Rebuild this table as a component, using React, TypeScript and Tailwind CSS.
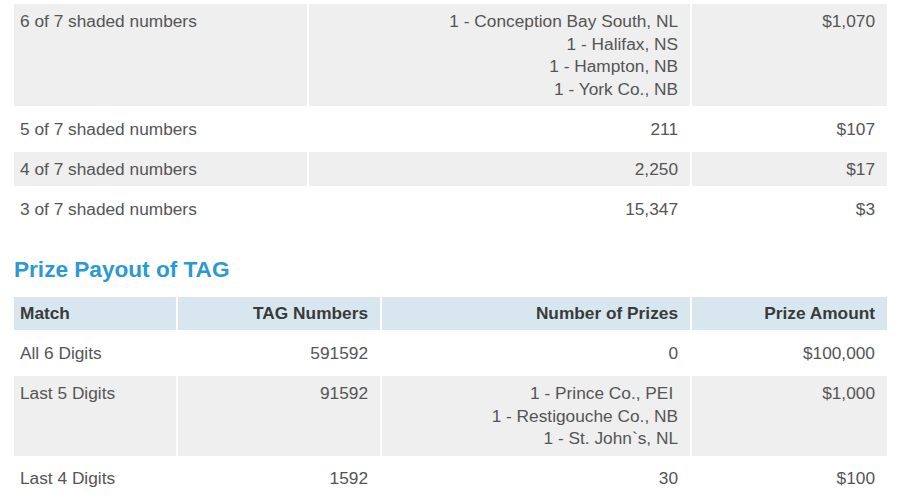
import React from 'react';

type Row = { cells: string[][]; shaded: boolean; size: string };

const winners: Row[] = [
  {
    cells: [
      ['6 of 7 shaded numbers'],
      ['1 - Conception Bay South, NL', '1 - Halifax, NS', '1 - Hampton, NB', '1 - York Co., NB'],
      ['$1,070'],
    ],
    shaded: true,
    size: 'h-[102px] pt-[6px]',
  },
  { cells: [['5 of 7 shaded numbers'], ['211'], ['$107']], shaded: false, size: 'h-[46px] pt-[12px]' },
  { cells: [['4 of 7 shaded numbers'], ['2,250'], ['$17']], shaded: true, size: 'h-[34px] pt-[6px]' },
  { cells: [['3 of 7 shaded numbers'], ['15,347'], ['$3']], shaded: false, size: 'h-[46px] pt-[12px]' },
];

const tagRows: Row[] = [
  { cells: [['All 6 Digits'], ['591592'], ['0'], ['$100,000']], shaded: false, size: 'h-[46px] pt-[12px]' },
  {
    cells: [
      ['Last 5 Digits'],
      ['91592'],
      ['1 - Prince Co., PEI\u00a0', '1 - Restigouche Co., NB', '1 - St. John`s, NL'],
      ['$1,000'],
    ],
    shaded: true,
    size: 'h-[80px] pt-[6px]',
  },
  { cells: [['Last 4 Digits'], ['1592'], ['30'], ['$100']], shaded: false, size: 'h-[46px] pt-[11px]' },
];

function Cell({ lines, first, shaded, size }: { lines: string[]; first: boolean; shaded: boolean; size: string }) {
  return (
    <div
      className={`${size} ${first ? 'pl-[6px] text-left' : 'pr-[12px] text-right'} ${
        shaded ? 'bg-[#efefef]' : 'bg-white'
      }`}
    >
      {lines.map((l, i) => (
        <div key={i} className="whitespace-pre">
          {l}
        </div>
      ))}
    </div>
  );
}

export default function App() {
  return (
    <div
      className="w-[900px] h-[500px] overflow-hidden bg-white pt-[4px] pl-[14px] text-[17.3px] leading-[22.6px] text-[#555555]"
      style={{ fontFamily: '"Liberation Sans", Arial, sans-serif' }}
    >
      {/* Winning numbers table */}
      <div className="grid grid-cols-[293px_381px_195px] gap-x-[2px]">
        {winners.map((row, r) =>
          row.cells.map((lines, c) => (
            <Cell key={`${r}-${c}`} lines={lines} first={c === 0} shaded={row.shaded} size={row.size} />
          ))
        )}
      </div>

      <h2 className="mt-[23px] mb-[12px] text-[22.6px] leading-[30px] font-bold text-[#2a9ad3]">
        Prize Payout of TAG
      </h2>

      {/* TAG table */}
      <div className="grid grid-cols-[162px_202px_308px_195px] gap-x-[2px]">
        {['Match', 'TAG Numbers', 'Number of Prizes', 'Prize Amount'].map((h, i) => (
          <div
            key={h}
            className={`h-[33px] flex items-center bg-[#d8e7ef] font-bold text-[#3a3a3a] ${
              i === 0 ? 'pl-[6px] justify-start' : 'pr-[12px] justify-end'
            }`}
          >
            {h}
          </div>
        ))}
        {tagRows.map((row, r) =>
          row.cells.map((lines, c) => (
            <Cell key={`${r}-${c}`} lines={lines} first={c === 0} shaded={row.shaded} size={row.size} />
          ))
        )}
      </div>
    </div>
  );
}
